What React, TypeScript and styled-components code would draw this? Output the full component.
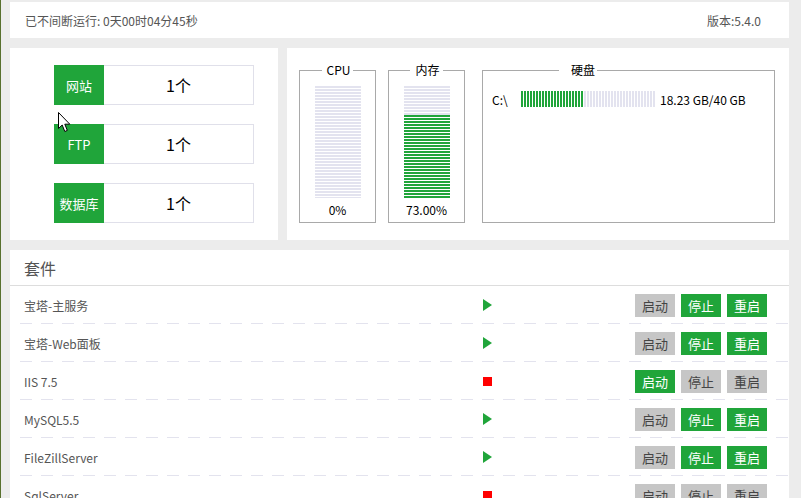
import React from 'react';
import styled, { createGlobalStyle } from 'styled-components';

const GREEN = '#20a53a';
const STRIPE = '#e3e3ef';

type Service = {
  name: string;
  running: boolean;
  // which buttons are highlighted: start / stop / restart
  active: [boolean, boolean, boolean];
};

const services: Service[] = [
  { name: '宝塔-主服务', running: true, active: [false, true, true] },
  { name: '宝塔-Web面板', running: true, active: [false, true, true] },
  { name: 'IIS 7.5', running: false, active: [true, false, false] },
  { name: 'MySQL5.5', running: true, active: [false, true, true] },
  { name: 'FileZillServer', running: true, active: [false, true, true] },
  { name: 'SqlServer', running: false, active: [false, false, false] },
];

const stats = [
  { label: '网站', value: '1个' },
  { label: 'FTP', value: '1个' },
  { label: '数据库', value: '1个' },
];

export default function App() {
  return (
    <Page>
      <GlobalStyle />
      <TopBar>
        <span>已不间断运行: 0天00时04分45秒</span>
        <span>版本:5.4.0</span>
      </TopBar>

      <PanelRow>
        <StatsPanel>
          {stats.map((s) => (
            <StatRow key={s.label}>
              <StatLabel>{s.label}</StatLabel>
              <StatValue>{s.value}</StatValue>
            </StatRow>
          ))}
        </StatsPanel>

        <SystemPanel>
          <GaugeBox>
            <BoxTitle>CPU</BoxTitle>
            <Gauge>
              <GaugeFill style={{ height: '0%' }} />
            </Gauge>
            <GaugeText>0%</GaugeText>
          </GaugeBox>
          <GaugeBox>
            <BoxTitle>内存</BoxTitle>
            <Gauge>
              <GaugeFill style={{ height: '74%' }} />
            </Gauge>
            <GaugeText>73.00%</GaugeText>
          </GaugeBox>
          <DiskBox>
            <DiskTitle>硬盘</DiskTitle>
            <DiskRow>
              <DiskName>C:\</DiskName>
              <DiskBar>
                <DiskFill style={{ width: `${(18.23 / 40) * 100}%` }} />
              </DiskBar>
              <DiskText>18.23 GB/40 GB</DiskText>
            </DiskRow>
          </DiskBox>
        </SystemPanel>
      </PanelRow>

      <ServicePanel>
        <PanelHeader>套件</PanelHeader>
        {services.map((svc) => (
          <ServiceRow key={svc.name}>
            <ServiceName>{svc.name}</ServiceName>
            <div>{svc.running ? <PlayIcon /> : <StopIcon />}</div>
            <Buttons>
              <Btn $active={svc.active[0]}>启动</Btn>
              <Btn $active={svc.active[1]}>停止</Btn>
              <Btn $active={svc.active[2]}>重启</Btn>
            </Buttons>
          </ServiceRow>
        ))}
      </ServicePanel>

      {/* mouse pointer captured in the screenshot */}
      <Cursor width="13" height="21" viewBox="0 0 13 21">
        <path
          d="M0.5 0.5 L0.5 16.5 L4.2 13 L6.8 19.5 L9.3 18.4 L6.8 12.2 L11.8 12.2 Z"
          fill="#fff"
          stroke="#000"
          strokeWidth="1"
        />
      </Cursor>
    </Page>
  );
}

const GlobalStyle = createGlobalStyle`
  html, body {
    margin: 0;
    padding: 0;
    background: #ececec;
  }
  body {
    font-family: "Noto Sans CJK SC", "Liberation Sans", sans-serif;
    font-size: 12px;
    color: #555;
  }
`;

const Page = styled.div`
  position: relative;
  height: 100vh;
  overflow: hidden;
  box-sizing: border-box;
  border-left: 1px solid #58702e;
  padding: 2px 12px 0 9px;
  display: flex;
  flex-direction: column;
  gap: 10px;
`;

const TopBar = styled.div`
  height: 36px;
  flex: none;
  background: #fff;
  display: flex;
  align-items: center;
  justify-content: space-between;
  padding: 0 28px 0 15px;
  font-size: 12px;
  color: #555;
`;

const PanelRow = styled.div`
  display: flex;
  gap: 9px;
  height: 192px;
  flex: none;
`;

const StatsPanel = styled.div`
  flex: none;
  width: 268px;
  box-sizing: border-box;
  background: #fff;
  padding: 17px 24px 0 44px;
  display: flex;
  flex-direction: column;
  gap: 19px;
`;

const StatRow = styled.div`
  display: flex;
  height: 40px;
`;

const StatLabel = styled.div`
  width: 50px;
  flex: none;
  background: ${GREEN};
  color: #fff;
  font-size: 13px;
  display: flex;
  align-items: center;
  justify-content: center;
`;

const StatValue = styled.div`
  flex: 1;
  border: 1px solid #e0e0ea;
  border-left: none;
  display: flex;
  align-items: center;
  justify-content: center;
  font-size: 16px;
  color: #000;
`;

const SystemPanel = styled.div`
  flex: 1;
  min-width: 0;
  background: #fff;
  display: flex;
  align-items: flex-start;
  gap: 12px;
  padding: 14px 14px 0 12px;
`;

const GaugeBox = styled.fieldset`
  flex: none;
  box-sizing: border-box;
  width: 77px;
  min-width: 0;
  height: 161px;
  margin: 0;
  padding: 0 15px;
  border: 1px solid #a9a9a9;
  display: flex;
  flex-direction: column;
  align-items: center;
`;

const BoxTitle = styled.legend`
  margin: 0 auto;
  padding: 0 3px 0 5px;
  line-height: 16px;
  font-size: 12px;
  color: #000;
`;

const Gauge = styled.div`
  position: relative;
  flex: none;
  margin-top: 8px;
  width: 46px;
  height: 112px;
  background: repeating-linear-gradient(to bottom, ${STRIPE} 0 2px, transparent 2px 3px);
`;

const GaugeFill = styled.div`
  position: absolute;
  left: 0;
  right: 0;
  bottom: 0;
  background: repeating-linear-gradient(to top, ${GREEN} 0 2px, #fff 2px 3px);
`;

const GaugeText = styled.div`
  margin-top: 4px;
  line-height: 16px;
  color: #000;
`;

const DiskBox = styled.fieldset`
  flex: none;
  box-sizing: border-box;
  width: 293px;
  min-width: 0;
  height: 161px;
  margin: 0 0 0 5px;
  padding: 0 9px;
  border: 1px solid #a9a9a9;
`;

const DiskTitle = styled.legend`
  margin-left: 67px;
  padding: 0 2px 0 12px;
  line-height: 16px;
  font-size: 12px;
  color: #000;
`;

const DiskRow = styled.div`
  display: flex;
  align-items: center;
  margin-top: 13px;
  height: 16px;
  color: #000;
`;

const DiskName = styled.span`
  width: 29px;
  flex: none;
`;

const DiskBar = styled.div`
  position: relative;
  flex: none;
  width: 135px;
  height: 16px;
  background: repeating-linear-gradient(to right, ${STRIPE} 0 2px, transparent 2px 3px);
`;

const DiskFill = styled.div`
  position: absolute;
  left: 0;
  top: 0;
  bottom: 0;
  background: repeating-linear-gradient(to right, ${GREEN} 0 2px, #fff 2px 3px);
`;

const DiskText = styled.span`
  margin-left: 4px;
  white-space: nowrap;
`;

const ServicePanel = styled.div`
  flex: 1;
  background: #fff;
`;

const PanelHeader = styled.div`
  height: 36px;
  box-sizing: border-box;
  padding-left: 14px;
  display: flex;
  align-items: center;
  font-size: 16px;
  color: #555;
  border-bottom: 1px solid #ddd;
`;

const ServiceRow = styled.div`
  height: 38px;
  display: grid;
  grid-template-columns: 459px 1fr auto;
  align-items: center;
  padding: 0 22px 0 14px;
  background-image: repeating-linear-gradient(to right, #e3e3ee 0 12px, transparent 12px 21px);
  background-size: calc(100% - 10px) 1px;
  background-position: 10px bottom;
  background-repeat: no-repeat;
`;

const ServiceName = styled.span`
  font-size: 12px;
  color: #555;
`;

const PlayIcon = styled.span`
  display: block;
  width: 0;
  height: 0;
  border-left: 9px solid ${GREEN};
  border-top: 6px solid transparent;
  border-bottom: 6px solid transparent;
`;

const StopIcon = styled.span`
  display: block;
  width: 9px;
  height: 9px;
  background: #f00;
`;

const Buttons = styled.div`
  display: flex;
  gap: 6px;
`;

const Btn = styled.button<{ $active: boolean }>`
  width: 40px;
  height: 23px;
  padding: 0;
  border: none;
  font-family: inherit;
  font-size: 13px;
  line-height: 23px;
  background: ${({ $active }) => ($active ? GREEN : '#c6c6c6')};
  color: ${({ $active }) => ($active ? '#fff' : '#444')};
  cursor: pointer;
`;

const Cursor = styled.svg`
  position: absolute;
  left: 57px;
  top: 112px;
  pointer-events: none;
`;
